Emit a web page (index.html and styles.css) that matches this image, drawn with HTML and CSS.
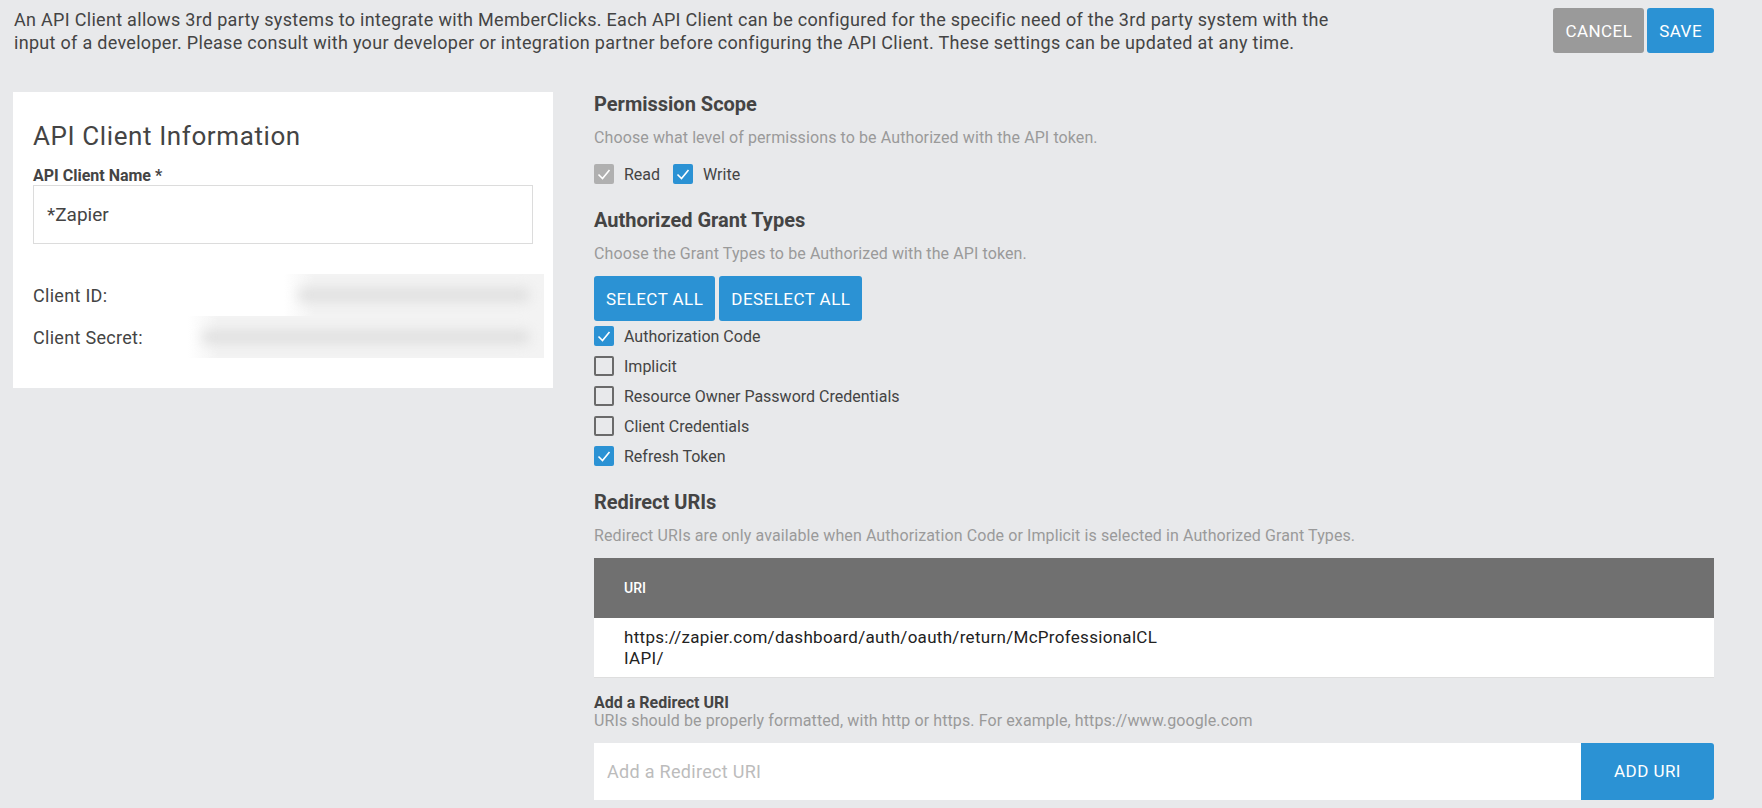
FILE: index.html
```html
<!DOCTYPE html>
<html lang="en">
<head>
    <meta charset="UTF-8">
    <meta name="viewport" content="width=device-width, initial-scale=1.0">
    <title>API Client</title>
    <link rel="stylesheet" href="styles.css">
</head>
<body>
    <div class="page">
        <div class="top">
            <p class="intro">An API Client allows 3rd party systems to integrate with MemberClicks. Each API Client can be configured for the specific need of the 3rd party system with the input of a developer. Please consult with your developer or integration partner before configuring the API Client. These settings can be updated at any time.</p>
            <div class="actions">
                <button class="btn btn-grey">CANCEL</button>
                <button class="btn">SAVE</button>
            </div>
        </div>

        <div class="content">
            <div class="card">
                <h1>API Client Information</h1>
                <label class="field-label">API Client Name *</label>
                <input type="text" class="text-input" value="*Zapier">
                <div class="info">
                    <div class="info-row">
                        <span class="info-label">Client ID:</span>
                        <span class="secret secret-id"><i></i></span>
                    </div>
                    <div class="info-row">
                        <span class="info-label">Client Secret:</span>
                        <span class="secret"><i></i></span>
                    </div>
                </div>
            </div>

            <div class="settings">
                <h2>Permission Scope</h2>
                <p class="help">Choose what level of permissions to be Authorized with the API token.</p>
                <div class="inline-checks">
                    <label class="check"><span class="box box-disabled"><svg viewBox="0 0 20 20"><polyline points="4.5,10.5 8.5,14.5 15.5,6"/></svg></span>Read</label>
                    <label class="check"><span class="box box-on"><svg viewBox="0 0 20 20"><polyline points="4.5,10.5 8.5,14.5 15.5,6"/></svg></span>Write</label>
                </div>

                <h2 class="gap-top">Authorized Grant Types</h2>
                <p class="help">Choose the Grant Types to be Authorized with the API token.</p>
                <div class="btn-row">
                    <button class="btn">SELECT ALL</button>
                    <button class="btn">DESELECT ALL</button>
                </div>
                <div class="check-list">
                    <label class="check"><span class="box box-on"><svg viewBox="0 0 20 20"><polyline points="4.5,10.5 8.5,14.5 15.5,6"/></svg></span>Authorization Code</label>
                    <label class="check"><span class="box"></span>Implicit</label>
                    <label class="check"><span class="box"></span>Resource Owner Password Credentials</label>
                    <label class="check"><span class="box"></span>Client Credentials</label>
                    <label class="check"><span class="box box-on"><svg viewBox="0 0 20 20"><polyline points="4.5,10.5 8.5,14.5 15.5,6"/></svg></span>Refresh Token</label>
                </div>

                <h2 class="gap-uris">Redirect URIs</h2>
                <p class="help">Redirect URIs are only available when Authorization Code or Implicit is selected in Authorized Grant Types.</p>
                <table class="uri-table">
                    <thead>
                        <tr><th>URI</th></tr>
                    </thead>
                    <tbody>
                        <tr><td><span class="uri">https://zapier.com/dashboard/auth/oauth/return/McProfessionalCL<wbr>IAPI/</span></td></tr>
                    </tbody>
                </table>

                <div class="add-label">Add a Redirect URI</div>
                <div class="add-help">URIs should be properly formatted, with http or https. For example, https://www.google.com</div>
                <div class="add-group">
                    <input type="text" class="add-input" placeholder="Add a Redirect URI">
                    <button class="btn add-btn">ADD URI</button>
                </div>
            </div>
        </div>
    </div>
</body>
</html>
```

FILE: styles.css
```css
body {
    margin: 0;
    background-color: #e8e9eb;
    font-family: Roboto, "Liberation Sans", sans-serif;
    color: #444;
}
.page {
    padding: 8px 48px 0 14px;
}
.top {
    display: flex;
    justify-content: space-between;
    align-items: flex-start;
}
.intro {
    margin: 0;
    max-width: 1345px;
    font-size: 18px;
    line-height: 23px;
    letter-spacing: 0.3px;
    color: #444;
}
.actions {
    display: flex;
    gap: 3px;
}
.btn {
    height: 45px;
    padding: 0 12px;
    border: none;
    border-radius: 3px;
    background-color: #2b92d4;
    color: white;
    font-family: Roboto, "Liberation Sans", sans-serif;
    font-size: 17px;
    letter-spacing: 0.45px;
    cursor: pointer;
}
.btn-grey {
    background-color: #9a9a9a;
}
.content {
    display: flex;
    gap: 41px;
    margin-top: 38px;
    margin-left: -1px;
}
.card {
    width: 540px;
    box-sizing: border-box;
    align-self: flex-start;
    background-color: white;
    padding: 28px 20px 30px 20px;
}
.card h1 {
    margin: 0;
    font-size: 26px;
    line-height: 32px;
    font-weight: 400;
    letter-spacing: 0.6px;
    color: #444;
}
.field-label {
    display: block;
    margin-top: 15px;
    font-size: 16px;
    line-height: 18px;
    font-weight: 700;
    color: #444;
}
.text-input {
    display: block;
    width: 100%;
    box-sizing: border-box;
    height: 59px;
    padding: 0 13px;
    border: 1px solid #dcdcdc;
    font-family: Roboto, "Liberation Sans", sans-serif;
    font-size: 19px;
    color: #444;
}
.info {
    margin-top: 30px;
}
.info-row {
    display: flex;
    align-items: center;
    height: 42px;
}
.info-label {
    font-size: 18px;
    letter-spacing: 0.3px;
    color: #444;
    width: 155px;
    flex-shrink: 0;
}
.secret {
    flex: 1;
    height: 42px;
    margin-right: -11px;
    display: flex;
    align-items: center;
    background: linear-gradient(to right, rgba(243,243,243,0), #f3f3f3 30px);
}
.secret-id {
    margin-left: 96px;
}
.secret i {
    display: block;
    height: 14px;
    width: 100%;
    margin: 0 14px;
    background-color: #e0e0e0;
    border-radius: 7px;
    filter: blur(6px);
}
.settings {
    flex: 1;
}
.settings h2 {
    margin: 0;
    font-size: 20px;
    line-height: 24px;
    font-weight: 700;
    color: #444;
}
.settings h2.gap-top {
    margin-top: 24px;
}
.settings h2.gap-uris {
    margin-top: 19px;
}
.help {
    margin: 12px 0 0 0;
    font-size: 16px;
    line-height: 20px;
    letter-spacing: 0.1px;
    color: #9a9a9a;
}
.inline-checks {
    display: flex;
    margin-top: 16px;
    height: 20px;
}
.inline-checks .check {
    margin-right: 13px;
}
.check {
    display: flex;
    align-items: center;
    gap: 10px;
    font-size: 16px;
    color: #444;
}
.box {
    width: 20px;
    height: 20px;
    box-sizing: border-box;
    border: 2px solid #6a6a6a;
    border-radius: 2px;
    display: flex;
    align-items: center;
    justify-content: center;
}
.box svg {
    width: 20px;
    height: 20px;
    fill: none;
    stroke: white;
    stroke-width: 1.6;
}
.box-on {
    border: none;
    background-color: #2b92d4;
}
.box-disabled {
    border: none;
    background-color: #b0b0b0;
}
.btn-row {
    display: flex;
    gap: 4px;
    margin-top: 12px;
}
.check-list .check {
    height: 30px;
}
.uri-table {
    width: 100%;
    margin-top: 12px;
    border-collapse: collapse;
}
.uri-table th {
    height: 60px;
    padding: 0 30px;
    background-color: #707070;
    color: white;
    text-align: left;
    font-size: 14px;
    font-weight: 500;
}
.uri-table td {
    height: 59px;
    box-sizing: border-box;
    padding: 2px 30px 0 30px;
    background-color: white;
    border-bottom: 1px solid #dedede;
    font-size: 17px;
    line-height: 21px;
    letter-spacing: 0.3px;
    color: #222;
}
.uri {
    display: block;
    max-width: 545px;
}
.add-label {
    margin-top: 16px;
    font-size: 16px;
    line-height: 18px;
    font-weight: 700;
    color: #444;
}
.add-help {
    font-size: 16px;
    line-height: 18px;
    letter-spacing: 0.1px;
    color: #9a9a9a;
}
.add-group {
    display: flex;
    margin-top: 13px;
    height: 57px;
}
.add-input {
    flex: 1;
    border: none;
    padding: 0 13px;
    font-family: Roboto, "Liberation Sans", sans-serif;
    font-size: 18px;
    letter-spacing: 0.3px;
    color: #444;
}
.add-input::placeholder {
    color: #bcbcbc;
}
.add-btn {
    width: 133px;
    height: 57px;
    border-radius: 0 3px 3px 0;
}
```
